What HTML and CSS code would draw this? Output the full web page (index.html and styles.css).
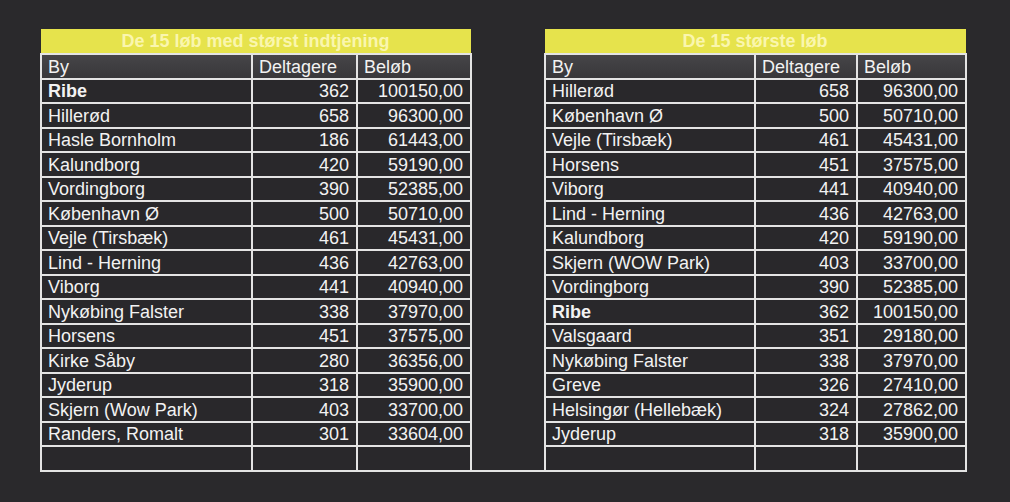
FILE: index.html
```html
<!DOCTYPE html>
<html lang="da">
<head>
<meta charset="utf-8">
<title>Løb</title>
<link rel="stylesheet" href="styles.css">
</head>
<body>
<table class="sheet">
  <colgroup>
    <col class="c-by"><col class="c-dt"><col class="c-bl">
    <col class="c-gap">
    <col class="c-by2"><col class="c-dt2"><col class="c-bl2">
  </colgroup>
  <tr class="title">
    <td colspan="3">De 15 løb med størst indtjening</td>
    <td class="gap"></td>
    <td colspan="3">De 15 største løb</td>
  </tr>
  <tr class="head">
    <td>By</td><td>Deltagere</td><td>Beløb</td>
    <td class="gap"></td>
    <td>By</td><td>Deltagere</td><td>Beløb</td>
  </tr>
  <tr><td class="b">Ribe</td><td class="n">362</td><td class="n">100150,00</td><td class="gap"></td><td>Hillerød</td><td class="n">658</td><td class="n">96300,00</td></tr>
  <tr><td>Hillerød</td><td class="n">658</td><td class="n">96300,00</td><td class="gap"></td><td>København Ø</td><td class="n">500</td><td class="n">50710,00</td></tr>
  <tr><td>Hasle Bornholm</td><td class="n">186</td><td class="n">61443,00</td><td class="gap"></td><td>Vejle (Tirsbæk)</td><td class="n">461</td><td class="n">45431,00</td></tr>
  <tr><td>Kalundborg</td><td class="n">420</td><td class="n">59190,00</td><td class="gap"></td><td>Horsens</td><td class="n">451</td><td class="n">37575,00</td></tr>
  <tr><td>Vordingborg</td><td class="n">390</td><td class="n">52385,00</td><td class="gap"></td><td>Viborg</td><td class="n">441</td><td class="n">40940,00</td></tr>
  <tr><td>København Ø</td><td class="n">500</td><td class="n">50710,00</td><td class="gap"></td><td>Lind - Herning</td><td class="n">436</td><td class="n">42763,00</td></tr>
  <tr><td>Vejle (Tirsbæk)</td><td class="n">461</td><td class="n">45431,00</td><td class="gap"></td><td>Kalundborg</td><td class="n">420</td><td class="n">59190,00</td></tr>
  <tr><td>Lind - Herning</td><td class="n">436</td><td class="n">42763,00</td><td class="gap"></td><td>Skjern (WOW Park)</td><td class="n">403</td><td class="n">33700,00</td></tr>
  <tr><td>Viborg</td><td class="n">441</td><td class="n">40940,00</td><td class="gap"></td><td>Vordingborg</td><td class="n">390</td><td class="n">52385,00</td></tr>
  <tr><td>Nykøbing Falster</td><td class="n">338</td><td class="n">37970,00</td><td class="gap"></td><td class="b">Ribe</td><td class="n">362</td><td class="n">100150,00</td></tr>
  <tr><td>Horsens</td><td class="n">451</td><td class="n">37575,00</td><td class="gap"></td><td>Valsgaard</td><td class="n">351</td><td class="n">29180,00</td></tr>
  <tr><td>Kirke Såby</td><td class="n">280</td><td class="n">36356,00</td><td class="gap"></td><td>Nykøbing Falster</td><td class="n">338</td><td class="n">37970,00</td></tr>
  <tr><td>Jyderup</td><td class="n">318</td><td class="n">35900,00</td><td class="gap"></td><td>Greve</td><td class="n">326</td><td class="n">27410,00</td></tr>
  <tr><td>Skjern (Wow Park)</td><td class="n">403</td><td class="n">33700,00</td><td class="gap"></td><td>Helsingør (Hellebæk)</td><td class="n">324</td><td class="n">27862,00</td></tr>
  <tr><td>Randers, Romalt</td><td class="n">301</td><td class="n">33604,00</td><td class="gap"></td><td>Jyderup</td><td class="n">318</td><td class="n">35900,00</td></tr>
  <tr class="last"><td></td><td></td><td></td><td class="gap"></td><td></td><td></td><td></td></tr>
</table>
</body>
</html>
```

FILE: styles.css
```css
html, body {
  margin: 0;
  background: #2a292c;
}

body {
  padding: 29px 0 0 40px;
  font-family: "Liberation Sans", Arial, sans-serif;
  font-size: 18px;
  color: #f2f2f2;
}

.sheet {
  border-collapse: collapse;
  table-layout: fixed;
  width: 925px;
}

.c-by { width: 211px; }
.c-dt { width: 105px; }
.c-bl { width: 114px; }
.c-gap { width: 74px; }
.c-by2 { width: 210px; }
.c-dt2 { width: 102px; }
.c-bl2 { width: 109px; }

.sheet td {
  border: 2px solid #e4e4e4;
  height: 21.5px;
  padding: 1px 7px 0 6px;
  line-height: 20px;
  background: #29282b;
  white-space: nowrap;
  overflow: hidden;
}

.sheet td.n {
  text-align: right;
}

.sheet td.b {
  font-weight: bold;
}

.sheet tr.title td {
  background: #e6e34c;
  color: #faf6ae;
  font-weight: bold;
  font-size: 18px;
  text-align: center;
  border-top: none;
  border-left: none;
  border-right: none;
  height: 24px;
  padding-top: 0;
}

.sheet tr.head td {
  background: linear-gradient(#464548, #38373a);
}

.sheet td.gap,
.sheet tr.title td.gap,
.sheet tr.head td.gap {
  background: #2a292c;
  border-top: none;
  border-bottom: none;
}

.sheet tr.last td.gap {
  border-bottom: 2px solid #e4e4e4;
}
```
